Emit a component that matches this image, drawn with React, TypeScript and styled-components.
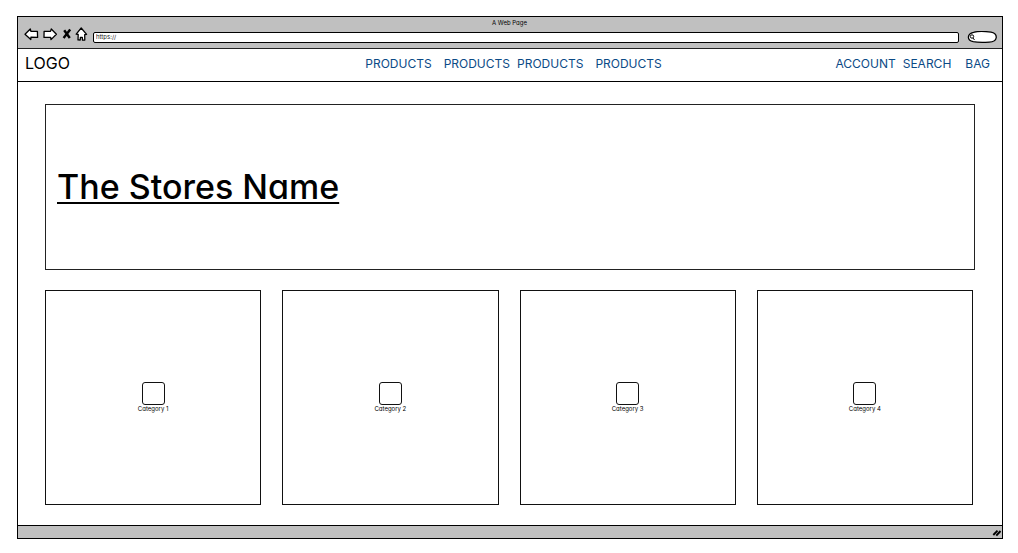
import React from "react";
import styled, { createGlobalStyle } from "styled-components";

const GlobalStyle = createGlobalStyle`
  * { box-sizing: border-box; }
  body {
    margin: 0;
    background: #fff;
    color: #000;
    font-family: Inter, "Liberation Sans", sans-serif;
    font-feature-settings: "cv11";
  }
  h1, p { margin: 0; font-weight: 400; }
`;

const Page = styled.div`
  padding: 16px 15px 14px 17px;
`;

const BrowserWindow = styled.div`
  border: 1px solid #000;
  background: #fff;
`;

const Chrome = styled.header`
  height: 32px;
  padding: 0 5px 0 6px;
  background: #c0c0c0;
  border-bottom: 1px solid #222;
`;

const WindowTitle = styled.p`
  height: 10px;
  padding-right: 2px;
  font-size: 6px;
  line-height: 12px;
  text-align: center;
`;

const Toolbar = styled.div`
  display: flex;
  align-items: flex-start;
  height: 18px;
`;

const IconButton = styled.button<{ $width: number }>`
  width: ${(p) => p.$width}px;
  height: 14px;
  padding: 0;
  border: 0;
  background: none;
  flex: none;
  svg { display: block; }
`;

const Address = styled.input`
  flex: 1;
  min-width: 0;
  height: 11px;
  margin: 5px 8px 0 4px;
  padding: 0 2px 2px;
  border: 1px solid #000;
  border-radius: 2px;
  background: #fff;
  color: #222;
  font: 6px/8px Inter, "Liberation Sans", sans-serif;
`;

const SearchPill = styled.button`
  width: 30px;
  height: 12px;
  margin-top: 4px;
  padding: 0;
  border: 0;
  background: none;
  flex: none;
  svg { display: block; }
`;

const SiteHeader = styled.div`
  display: flex;
  align-items: center;
  justify-content: space-between;
  height: 33px;
  padding: 0 12px 2px 7px;
  border-bottom: 1px solid #000;
`;

const Logo = styled.a`
  flex: 1;
  color: #000;
  font-size: 16px;
  line-height: 18px;
  padding-bottom: 2px;
  text-decoration: none;
`;

const Nav = styled.nav`
  display: flex;
  margin-left: 12px;
`;

const AccountNav = styled.nav`
  display: flex;
  flex: 1;
  justify-content: flex-end;
`;

const NavLink = styled.a<{ $gap: number }>`
  margin-left: ${(p) => p.$gap}px;
  color: #0b4a86;
  font-size: 12px;
  line-height: 16px;
  text-decoration: none;
`;

const Main = styled.main`
  padding: 22px 27px 20px 27px;
`;

const Hero = styled.section`
  display: flex;
  align-items: center;
  height: 166px;
  padding: 0 12px 0 11px;
  border: 1px solid #222;
`;

const StoreName = styled.h1`
  font-size: 34px;
  line-height: 44px;
  font-weight: 500;
  text-decoration: underline;
  text-decoration-thickness: 2px;
  text-underline-offset: 3px;
  text-decoration-skip-ink: none;
`;

const Categories = styled.section`
  display: grid;
  grid-template-columns: repeat(4, 1fr);
  gap: 21px;
  margin: 20px 2px 0 0;
`;

const Card = styled.a`
  display: flex;
  flex-direction: column;
  align-items: center;
  justify-content: center;
  height: 215px;
  border: 1px solid #111;
  color: #000;
  font-size: 6px;
  line-height: 8px;
  text-decoration: none;
`;

const Thumb = styled.span`
  width: 23px;
  height: 23px;
  border: 1px solid #111;
  border-radius: 3px;
`;

const StatusBar = styled.footer`
  display: flex;
  justify-content: flex-end;
  align-items: center;
  height: 13px;
  border-top: 1px solid #000;
  background: #c0c0c0;
`;

const products = [
  { label: "PRODUCTS", gap: 0 },
  { label: "PRODUCTS", gap: 12 },
  { label: "PRODUCTS", gap: 7 },
  { label: "PRODUCTS", gap: 12 },
];
const account = [
  { label: "ACCOUNT", gap: 0 },
  { label: "SEARCH", gap: 7 },
  { label: "BAG", gap: 14 },
];
const categories = ["Category 1", "Category 2", "Category 3", "Category 4"];

const ink = { fill: "#fff", stroke: "#000", strokeWidth: 1.3, strokeLinejoin: "round" as const };

export default function App() {
  return (
    <Page>
      <GlobalStyle />
      <BrowserWindow>
        <Chrome>
          <WindowTitle>A Web Page</WindowTitle>
          <Toolbar>
            <IconButton $width={18} aria-label="Back">
              <svg width="16" height="14" viewBox="0 0 16 14">
                <path {...ink} d="M1 7.2 6.3 2l.6 2.3 6.5.1.2 6-6.7-.2-.1 2.3z" />
              </svg>
            </IconButton>
            <IconButton $width={20} aria-label="Forward">
              <svg width="16" height="14" viewBox="0 0 16 14">
                <path {...ink} d="M14.4 7.2 9.3 2l-.8 2.4-6.4-.1-.1 6.1 6.7-.1.3 2.3z" />
              </svg>
            </IconButton>
            <IconButton $width={13} aria-label="Stop">
              <svg width="10" height="14" viewBox="0 0 10 14">
                <path d="M2.2 3.2 7.8 11M8.2 2.6 1.6 11" stroke="#000" strokeWidth="2.4" />
              </svg>
            </IconButton>
            <IconButton $width={14} aria-label="Home">
              <svg width="13" height="14" viewBox="0 0 13 14">
                <path {...ink} d="M6.2 1 1.2 7.2l2 .3-.2 5.4 2.2.1.2-2.6h1.9l.2 2.7 2.3-.1-.1-5.3 1.9-.3z" />
              </svg>
            </IconButton>
            <Address aria-label="Address" defaultValue="https://" />
            <SearchPill aria-label="Search">
              <svg width="30" height="12" viewBox="0 0 30 12">
                <path {...ink} d="M6.5 1.3C10 .4 19 .5 24 1.1c4 .7 5.500 3 5.200 5.700-.4 3-3 4.100-7 4.300-6 .3-12 .3-16-.4C3 10 1.300 8.300 1.400 6 1.500 3.500 3.500 2 6.500 1.300z" />
                <circle cx="5" cy="5.5" r="1.7" fill="none" stroke="#000" />
                <path d="m6 7 1.5 2" stroke="#000" />
              </svg>
            </SearchPill>
          </Toolbar>
        </Chrome>
        <SiteHeader>
          <Logo href="#">LOGO</Logo>
          <Nav aria-label="Products">
            {products.map((item, i) => (
              <NavLink key={i} href="#" $gap={item.gap}>{item.label}</NavLink>
            ))}
          </Nav>
          <AccountNav aria-label="Account">
            {account.map((item) => (
              <NavLink key={item.label} href="#" $gap={item.gap}>{item.label}</NavLink>
            ))}
          </AccountNav>
        </SiteHeader>
        <Main>
          <Hero>
            <StoreName>The Stores Name</StoreName>
          </Hero>
          <Categories>
            {categories.map((label) => (
              <Card key={label} href="#">
                <Thumb />
                {label}
              </Card>
            ))}
          </Categories>
        </Main>
        <StatusBar>
          <svg width="10" height="10" viewBox="0 0 10 10">
            <path d="M1.300 8 5.500 3.700M4.300 8.700 8.500 4" stroke="#000" strokeWidth="1.9" />
          </svg>
        </StatusBar>
      </BrowserWindow>
    </Page>
  );
}
